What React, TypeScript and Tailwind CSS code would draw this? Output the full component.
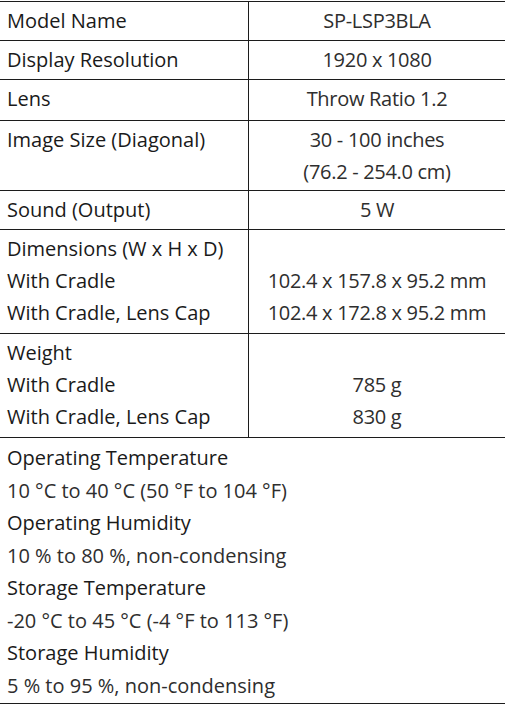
const rows: { label: string[]; value: string[]; h: string }[] = [
  { label: ["Model Name"], value: ["SP-LSP3BLA"], h: "h-[39px]" },
  { label: ["Display Resolution"], value: ["1920 x 1080"], h: "h-[39px]" },
  { label: ["Lens"], value: ["Throw Ratio 1.2"], h: "h-[41px]" },
  { label: ["Image Size (Diagonal)"], value: ["30 - 100 inches", "(76.2 - 254.0 cm)"], h: "h-[70px]" },
  { label: ["Sound (Output)"], value: ["5 W"], h: "h-[39px]" },
  {
    label: ["Dimensions (W x H x D)", "With Cradle", "With Cradle, Lens Cap"],
    value: ["", "102.4 x 157.8 x 95.2 mm", "102.4 x 172.8 x 95.2 mm"],
    h: "h-[104px]",
  },
  { label: ["Weight", "With Cradle", "With Cradle, Lens Cap"], value: ["", "785 g", "830 g"], h: "h-[104px]" },
];

const env = [
  ["Operating Temperature", "10 °C to 40 °C (50 °F to 104 °F)"],
  ["Operating Humidity", "10 % to 80 %, non-condensing"],
  ["Storage Temperature", "-20 °C to 45 °C (-4 °F to 113 °F)"],
  ["Storage Humidity", "5 % to 95 %, non-condensing"],
];

export default function App() {
  return (
    <div
      className="w-[505px] h-[709px] bg-white pt-[1px] text-[20px] leading-[32px]"
      style={{ fontFamily: '"Open Sans", "Noto Sans", sans-serif' }}
    >
      <div className="border-t border-[#1c1c1c]">
        {rows.map((r, i) => (
          <div key={i} className={`${r.h} grid grid-cols-[249px_1fr] border-b border-[#1c1c1c]`}>
            <div className="border-r border-[#1c1c1c] px-[7px] py-[3px] text-[#1a1a1a]">
              {r.label.map((l, j) => (
                <div key={j}>{l}</div>
              ))}
            </div>
            <div className="py-[3px] text-center text-[#2e2e2e] tracking-[-0.3px]">
              {r.value.map((v, j) => (
                <div key={j}>{v || "\u00a0"}</div>
              ))}
            </div>
          </div>
        ))}
        <div className="h-[266px] border-b border-[#1c1c1c] px-[7px] pt-[4px] leading-[32.5px]">
          {env.map(([h, v]) => (
            <div key={h}>
              <div className="text-[#1a1a1a]">{h}</div>
              <div className="text-[#2e2e2e]">{v}</div>
            </div>
          ))}
        </div>
      </div>
    </div>
  );
}
